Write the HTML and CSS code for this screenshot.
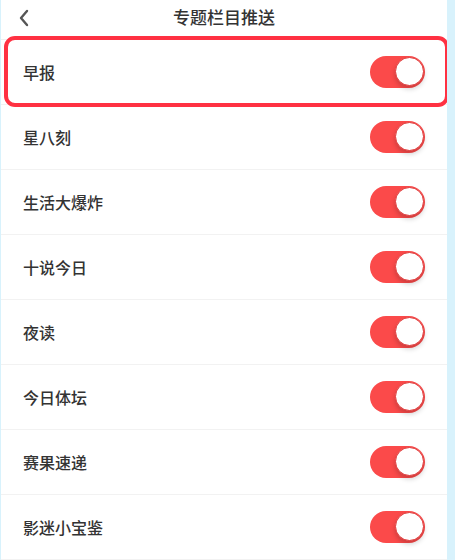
FILE: index.html
```html
<!DOCTYPE html>
<html lang="zh-CN">
<head>
  <meta charset="UTF-8" />
  <title>专题栏目推送</title>
  <link rel="stylesheet" href="styles.css">
</head>
<body>
  <div class="page">
    <div class="header">
      <svg class="back" width="12" height="18" viewBox="0 0 12 18">
        <path d="M9 2 L3 9 L9 16" fill="none" stroke="#555" stroke-width="2.4" stroke-linecap="round" stroke-linejoin="round"/>
      </svg>
      <span class="title">专题栏目推送</span>
    </div>

    <div class="row marked">
      <span class="name">早报</span>
      <span class="switch on"></span>
      <span class="mark"></span>
    </div>
    <div class="row">
      <span class="name">星八刻</span>
      <span class="switch on"></span>
    </div>
    <div class="row">
      <span class="name">生活大爆炸</span>
      <span class="switch on"></span>
    </div>
    <div class="row">
      <span class="name">十说今日</span>
      <span class="switch on"></span>
    </div>
    <div class="row">
      <span class="name">夜读</span>
      <span class="switch on"></span>
    </div>
    <div class="row">
      <span class="name">今日体坛</span>
      <span class="switch on"></span>
    </div>
    <div class="row">
      <span class="name">赛果速递</span>
      <span class="switch on"></span>
    </div>
    <div class="row">
      <span class="name">影迷小宝鉴</span>
      <span class="switch on"></span>
    </div>
  </div>
</body>
</html>
```

FILE: styles.css
```css
body { margin: 0; background: #d8f2fc; font-family: "Noto Sans CJK SC", "Noto Sans", sans-serif; color: #333; }
.page { margin-left: 1px; width: 446px; height: 560px; background: #fff; overflow: hidden; }

.header { position: relative; height: 40px; display: flex; align-items: center; justify-content: center; border-bottom: 1px solid #f0f0f0; box-sizing: border-box; }
.back { position: absolute; left: 17px; top: 9px; }
.title { font-size: 17px; font-weight: 500; color: #333; margin-top: -6px; }

.row { position: relative; height: 65px; display: flex; align-items: center; justify-content: space-between; padding: 0 22px 0 22px; border-bottom: 1px solid #f2f2f2; box-sizing: border-box; }
.name { font-size: 16px; font-weight: 500; color: #333; }

.switch { position: relative; width: 55px; height: 32px; border-radius: 16px; background: #fb4a4a; }
.switch::after { content: ""; position: absolute; right: 1px; top: 1px; width: 29px; height: 29px; border-radius: 50%; background: #fff; border: 0.5px solid #e03a3a; box-shadow: 0 3px 5px rgba(0, 0, 0, 0.18); box-sizing: border-box; }

.mark { position: absolute; left: 3px; right: -2px; top: -4px; bottom: -3px; border: 4px solid #ff3142; border-radius: 11px; pointer-events: none; }
```
